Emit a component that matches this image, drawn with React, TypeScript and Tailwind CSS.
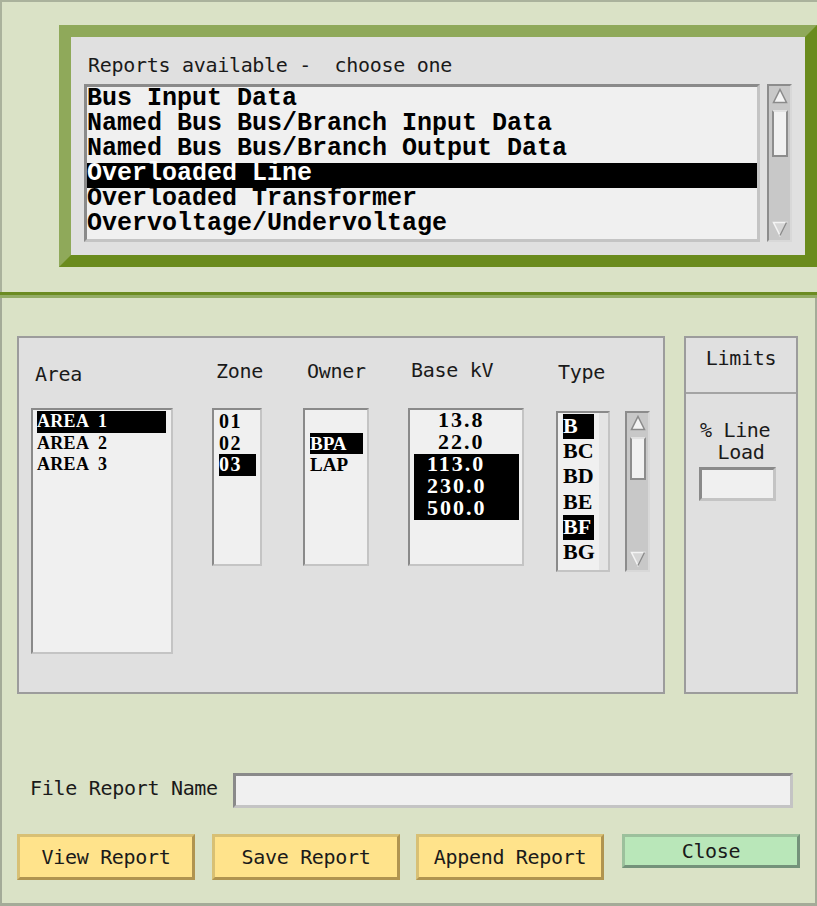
import React from 'react';

const label = "font-['DejaVu_Sans_Mono',monospace] text-[20px] leading-[20px] tracking-[-0.3px] text-[#1a1a1a] whitespace-pre";
const serif = "font-['Liberation_Serif',serif] font-bold";
const inset = "border-2 border-t-[#8a8a8a] border-l-[#8a8a8a] border-b-[#c4c4c4] border-r-[#c4c4c4] bg-[#f0f0f0]";

const reports = [
  'Bus Input Data',
  'Named Bus Bus/Branch Input Data',
  'Named Bus Bus/Branch Output Data',
  'Overloaded Line',
  'Overloaded Transformer',
  'Overvoltage/Undervoltage',
];

const UpArrow = () => (
  <svg width="16" height="16" viewBox="0 0 16 16">
    <polygon points="8,1.5 14.5,14.5 1.5,14.5" fill="#f4f4f4" stroke="#8a8a8a" strokeWidth="1.5" />
  </svg>
);

const DownArrow = () => (
  <svg width="16" height="16" viewBox="0 0 16 16">
    <polygon points="1.5,1.5 14.5,1.5 8,14.5" fill="#d6d6d6" stroke="#f4f4f4" strokeWidth="1.5" />
    <polyline points="14.5,1.5 8,14.5" fill="none" stroke="#8a8a8a" strokeWidth="1.5" />
  </svg>
);

const ScrollBar: React.FC<{ className: string; thumb: string }> = ({ className, thumb }) => (
  <div className={`w-[25px] ${className} bg-[#c8c8c8] border-2 border-t-[#8c8c8c] border-l-[#8c8c8c] border-r-[#d8d8d8] border-b-[#d8d8d8] flex flex-col items-center`}>
    <div className="mt-[2px] h-[16px]"><UpArrow /></div>
    <div className={`mt-[6px] w-[16px] ${thumb} bg-[#f0f0f0] border-2 border-t-[#e0e0e0] border-l-[#8c8c8c] border-r-[#8c8c8c] border-b-[#8c8c8c]`} />
    <div className="mt-auto mb-[3px] h-[16px]"><DownArrow /></div>
  </div>
);

const Row: React.FC<{ sel?: boolean; className: string; children?: React.ReactNode }> = ({ sel, className, children }) => (
  <div className={`${className} whitespace-pre ${sel ? 'bg-black text-white' : 'text-black'}`}>{children}</div>
);

export default function App() {
  return (
    <div className="w-[817px] h-[906px] bg-[#dae2c6] flex flex-col overflow-hidden">
      {/* top pane */}
      <div className="h-[292px] border-t-2 border-l-2 border-[#aab29c] pl-[57px] pt-[23px]">
        <div className="w-[758px] h-[242px] border-[12px] border-t-[#8fa95a] border-l-[#8fa95a] border-b-[#6a8b1d] border-r-[#6a8b1d] bg-[#e0e0e0] pt-[18px] pl-[13px]">
          <div className={`${label} pl-[4px]`}>Reports available -  choose one</div>
          <div className="mt-[9px] flex gap-[7px]">
            <div className={`w-[676px] h-[158px] ${inset} border-[3px] pt-[1px] font-['Liberation_Mono',monospace] font-bold text-[25px]`}>
              {reports.map((r, i) => (
                <Row key={r} sel={i === 3} className="h-[25px] leading-[21px]">{r}</Row>
              ))}
            </div>
            <ScrollBar className="h-[158px]" thumb="h-[47px]" />
          </div>
        </div>
      </div>

      {/* separator */}
      <div className="h-[3px] bg-[#6b8b22]" />
      <div className="h-[3px] bg-[#93ac66]" />

      {/* lower pane */}
      <div className="flex-1 border-l-2 border-r-2 border-b-[3px] border-[#a4ab98] pl-[15px] pt-[38px]">
        <div className="flex gap-[19px]">
          {/* selection panel */}
          <div className="w-[648px] h-[358px] border-2 border-[#9c9c9c] bg-[#e0e0e0] flex pl-[12px]">
            <div className="flex flex-col w-[142px]">
              <div className={`h-[70px] pt-[26px] pl-[4px] ${label}`}>Area</div>
              <div className={`h-[246px] ${inset} pt-[1px] pl-[4px] pr-[5px] ${serif} text-[18px] tracking-[0.3px] [word-spacing:5px]`}>
                <Row sel className="h-[21.6px] leading-[21.6px]">AREA 1</Row>
                <Row className="h-[21.6px] leading-[21.6px]">AREA 2</Row>
                <Row className="h-[21.6px] leading-[21.6px]">AREA 3</Row>
              </div>
            </div>

            <div className="flex flex-col w-[50px] ml-[39px]">
              <div className={`h-[70px] pt-[23px] pl-[4px] ${label}`}>Zone</div>
              <div className={`h-[158px] ${inset} pt-[1px] pl-[5px] pr-[4px] ${serif} text-[20px] tracking-[1.5px]`}>
                <Row className="h-[21.6px] leading-[21.6px]">01</Row>
                <Row className="h-[21.6px] leading-[21.6px]">02</Row>
                <Row sel className="h-[21.6px] leading-[21.6px]">03</Row>
              </div>
            </div>

            <div className="flex flex-col w-[66px] ml-[41px]">
              <div className={`h-[70px] pt-[23px] pl-[4px] ${label}`}>Owner</div>
              <div className={`h-[158px] ${inset} pt-[1px] pl-[5px] pr-[4px] ${serif} text-[19px]`}>
                <Row className="h-[21.6px] leading-[21.6px]" />
                <Row sel className="h-[21.6px] leading-[21.6px]">BPA</Row>
                <Row className="h-[21.6px] leading-[21.6px]">LAP</Row>
              </div>
            </div>

            <div className="flex flex-col w-[116px] ml-[39px]">
              <div className={`h-[70px] pt-[22px] pl-[3px] ${label}`}>Base kV</div>
              <div className={`h-[158px] ${inset} pl-[4px] pr-[3px] ${serif} text-[22px] tracking-[2px]`}>
                <Row className="h-[22px] leading-[20px] pl-[24px]">13.8</Row>
                <Row className="h-[22px] leading-[20px] pl-[24px]">22.0</Row>
                <Row sel className="h-[22px] leading-[20px] pl-[13px]">113.0</Row>
                <Row sel className="h-[22px] leading-[20px] pl-[13px]">230.0</Row>
                <Row sel className="h-[22px] leading-[20px] pl-[13px]">500.0</Row>
              </div>
            </div>

            <div className="flex flex-col w-[54px] ml-[32px]">
              <div className={`h-[73px] pt-[24px] pl-[2px] ${label}`}>Type</div>
              <div className="h-[161px] border-2 border-t-[#8a8a8a] border-l-[#8a8a8a] border-b-[#c4c4c4] border-r-[#c4c4c4] flex">
                <div className={`w-[41px] bg-[#f0f0f0] pt-[1px] pl-[5px] ${serif} text-[22px]`}>
                  {['B', 'BC', 'BD', 'BE', 'BF', 'BG'].map((t) => (
                    <Row key={t} sel={t === 'B' || t === 'BF'} className="w-[31px] h-[25.2px] leading-[23px]">{t}</Row>
                  ))}
                </div>
                <div className="flex-1 bg-[#e4e4e4]" />
              </div>
            </div>

            <div className="flex flex-col ml-[15px]">
              <div className="h-[73px]" />
              <ScrollBar className="h-[161px]" thumb="h-[43px]" />
            </div>
          </div>

          {/* limits panel */}
          <div className="w-[114px] h-[358px] border-2 border-[#9c9c9c] bg-[#e0e0e0] flex flex-col">
            <div className={`h-[56px] border-b-2 border-[#a4a4a4] pt-[10px] text-center ${label}`}>Limits</div>
            <div className={`pt-[26px] text-center ${label} leading-[21.5px]`}>
              <div>% Line </div>
              <div>Load</div>
            </div>
            <div className={`mt-[4px] ml-[13px] w-[77px] h-[34px] ${inset} border-[3px]`} />
          </div>
        </div>

        {/* file name */}
        <div className="mt-[79px] ml-[13px] flex items-start">
          <div className={`${label} mt-[5px]`}>File Report Name</div>
          <div className={`ml-[15px] w-[560px] h-[35px] ${inset} border-[3px]`} />
        </div>

        {/* buttons */}
        <div className="mt-[26px] flex items-start">
          <button className={`w-[178px] h-[46px] bg-[#ffe38b] border-[3px] border-t-[#d8c074] border-l-[#d8c074] border-b-[#b09450] border-r-[#b09450] ${label}`}>View Report</button>
          <button className={`ml-[17px] w-[188px] h-[46px] bg-[#ffe38b] border-[3px] border-t-[#d8c074] border-l-[#d8c074] border-b-[#b09450] border-r-[#b09450] ${label}`}>Save Report</button>
          <button className={`ml-[16px] w-[188px] h-[46px] bg-[#ffe38b] border-[3px] border-t-[#d8c074] border-l-[#d8c074] border-b-[#b09450] border-r-[#b09450] ${label}`}>Append Report</button>
          <button className={`ml-[18px] w-[178px] h-[34px] bg-[#b9e7b9] border-[3px] border-t-[#9cc09c] border-l-[#9cc09c] border-b-[#74927a] border-r-[#74927a] ${label}`}>Close</button>
        </div>
      </div>
    </div>
  );
}
